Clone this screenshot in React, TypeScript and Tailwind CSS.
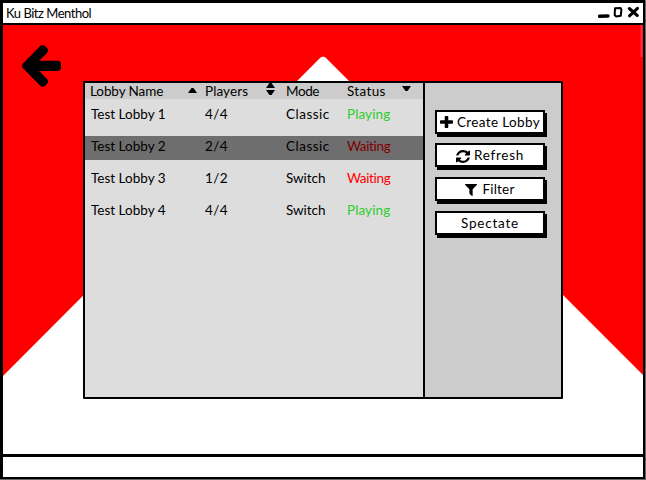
import React from "react";

const ICONS = {
  arrow:
    "M1664 896v128q0 53-32.5 90.5t-84.5 37.5h-704l293 294q38 36 38 90t-38 90l-75 76q-37 37-90 37-52 0-91-37l-651-652q-37-37-37-90 0-52 37-91l651-650q38-38 91-38 52 0 90 38l75 74q38 38 38 91t-38 91l-293 293h704q52 0 84.5 37.5t32.5 90.5z",
  plus: "M1600 736v192q0 40-28 68t-68 28h-416v416q0 40-28 68t-68 28h-192q-40 0-68-28t-28-68v-416h-416q-40 0-68-28t-28-68v-192q0-40 28-68t68-28h416v-416q0-40 28-68t68-28h192q40 0 68 28t28 68v416h416q40 0 68 28t28 68z",
  refresh:
    "M1639 1056q0 5-1 7-64 268-268 434.5t-478 166.5q-146 0-282.5-55t-243.5-157l-129 129q-19 19-45 19t-45-19-19-45v-448q0-26 19-45t45-19h448q26 0 45 19t19 45-19 45l-137 137q71 66 161 102t187 36q134 0 250-65t186-179q11-17 53-117 8-23 30-23h192q13 0 22.5 9.5t9.5 22.5zm25-800v448q0 26-19 45t-45 19h-448q-26 0-45-19t-19-45 19-45l138-138q-148-137-349-137-134 0-250 65t-186 179q-11 17-53 117-8 23-30 23h-199q-13 0-22.5-9.5t-9.5-22.5v-7q65-268 270-434.5t480-166.5q146 0 284 55.5t245 156.5l130-129q19-19 45-19t45 19 19 45z",
  filter:
    "M1595 295q17 41-14 70l-493 493v742q0 42-39 59-13 5-25 5-27 0-45-19l-256-256q-19-19-19-45v-486l-493-493q-31-29-14-70 17-39 59-39h1280q42 0 59 39z",
};

function Icon({ d, box, className }: { d: string; box: string; className: string }) {
  return (
    <svg viewBox={box} preserveAspectRatio="none" className={className} fill="currentColor" aria-hidden="true">
      <path d={d} />
    </svg>
  );
}

const COLS = "grid grid-cols-[115px_81px_61px_1fr]";

const ROWS = [
  { name: "Test Lobby 1", players: "4/4", mode: "Classic", status: "Playing", color: "text-[#2ecc2e]", row: "" },
  { name: "Test Lobby 2", players: "2/4", mode: "Classic", status: "Waiting", color: "text-[#800000]", row: "bg-[#6e6e6e]" },
  { name: "Test Lobby 3", players: "1/2", mode: "Switch", status: "Waiting", color: "text-[#ff0000]", row: "" },
  { name: "Test Lobby 4", players: "4/4", mode: "Switch", status: "Playing", color: "text-[#2ecc2e]", row: "" },
];

function Button({ children }: { children: React.ReactNode }) {
  return (
    <button className="flex h-[24px] w-[110px] items-center justify-center whitespace-nowrap border-2 border-black bg-white pt-[2px] text-[13.5px] leading-none shadow-[2px_3px_0_0_#000]">
      {children}
    </button>
  );
}

export default function App() {
  return (
    <div className="flex h-[480px] w-[646px] flex-col overflow-hidden bg-[#666666] font-['Lato','Liberation_Sans',sans-serif] text-[13.5px] text-black">
      <div className="flex h-[479px] w-[645px] flex-col border-2 border-l-[3px] border-t-[3px] border-black bg-white">
        <header className="flex h-[20px] shrink-0 items-center justify-between pl-[3px] pr-[3px]">
          <h1 className="text-[13px] leading-none tracking-[-0.48px]">Ku Bitz Menthol</h1>
          <svg className="-mt-[2px] h-[14px] w-[42px]" viewBox="598 5 42 14" fill="none" stroke="#000" aria-hidden="true">
            <path d="M599.5 16.2L608 16" strokeWidth="3.4" strokeLinecap="round" />
            <path d="M615 8.2L620.5 7.9L621.4 9.5L620.8 15.8L616 16.4L614.7 15Z" strokeWidth="2" strokeLinejoin="round" />
            <path d="M629.3 8.5L637.3 15.5M637.5 8.3L629.5 15.8" strokeWidth="3" strokeLinecap="round" />
          </svg>
        </header>
        <main className="relative h-[434px] shrink-0 border-y-2 border-b-[3px] border-black">
          <svg className="absolute inset-0 h-[430px] w-[640px]" viewBox="3 25 640 430" aria-hidden="true">
            <path d="M3 25H643V375L325.5 57.5L323 56.5L320.5 57.5L3 376Z" fill="#ff0000" />
            <path d="M641.5 25V57" stroke="#ff3045" strokeWidth="2" />
          </svg>
          <div className="relative flex items-start">
            <button className="ml-[19px] mt-[20px] block h-[42px] w-[39px] shrink-0" aria-label="Back">
              <Icon d={ICONS.arrow} box="192 180 1472 1565" className="h-[42px] w-[39px]" />
            </button>
            <div className="ml-[22px] mt-[55.5px] flex h-[318.5px] w-[480px] shrink-0 rounded-[1px] border-[2.5px] border-black">
              <section className="w-[338px] shrink-0 bg-[#dddddd]">
                <div className={`${COLS} h-[16px] items-center bg-[#cccccc] pl-[5px] pt-[2px] leading-none tracking-[0.1px]`}>
                  <div className="flex items-center justify-between pr-[8px]">
                    <span className="tracking-[-0.1px]">Lobby Name</span>
                    <svg className="-mt-[3px] h-[5px] w-[9px]" viewBox="0 0 9 5"><path d="M0 5L3.5 0H5.5L9 5Z" /></svg>
                  </div>
                  <div className="flex items-center justify-between pr-[11px]">
                    Players
                    <svg className="-mt-[5px] h-[12px] w-[9px]" viewBox="0 0 9 12"><path d="M0 5L3.5 0H5.5L9 5ZM0 7H9L5.5 12H3.5Z" /></svg>
                  </div>
                  <div className="tracking-[-0.4px]">Mode</div>
                  <div className="flex items-center justify-between pr-[12px]">
                    <span className="tracking-[0.35px]">Status</span>
                    <svg className="-mt-[6px] h-[5px] w-[9px]" viewBox="0 0 9 5"><path d="M0 0H9L5.5 5H3.5Z" /></svg>
                  </div>
                </div>
                <div className="flex flex-col gap-[8px] pt-[5.5px]">
                  {ROWS.map((r) => (
                    <div key={r.name} className={`${COLS} h-[24px] items-center pb-[2px] pl-[5px] leading-none ${r.row}`}>
                      <span className="pl-[1px] tracking-[0px]">{r.name}</span>
                      <span className="tracking-[0.4px]">{r.players}</span>
                      <span className={r.mode === "Classic" ? "tracking-[0.5px]" : "tracking-[-0.05px]"}>{r.mode}</span>
                      <span className={`${r.color} ${r.status === "Playing" ? "tracking-[0.1px]" : "tracking-[-0.35px]"}`}>{r.status}</span>
                    </div>
                  ))}
                </div>
              </section>
              <aside className="flex flex-1 flex-col gap-[9.7px] border-l-[2.5px] border-black bg-[#cccccc] pl-[10px] pt-[27px]">
                <Button>
                  <Icon d={ICONS.plus} box="192 128 1408 1408" className="-mt-[1px] mr-[4px] h-[12px] w-[13px]" />
                  <span className="tracking-[0.37px]">Create Lobby</span>
                </Button>
                <Button>
                  <Icon d={ICONS.refresh} box="128 128 1536 1536" className="mr-[4px] h-[13px] w-[14px]" />
                  <span className="tracking-[0.7px]">Refresh</span>
                </Button>
                <Button>
                  <Icon d={ICONS.filter} box="192 256 1408 1408" className="mr-[5px] h-[12px] w-[12px]" />
                  <span className="tracking-[0.2px]">Filter</span>
                </Button>
                <Button>
                  <span className="tracking-[0.8px]">Spectate</span>
                </Button>
              </aside>
            </div>
          </div>
        </main>
        <footer className="flex-1 bg-white" />
      </div>
    </div>
  );
}
